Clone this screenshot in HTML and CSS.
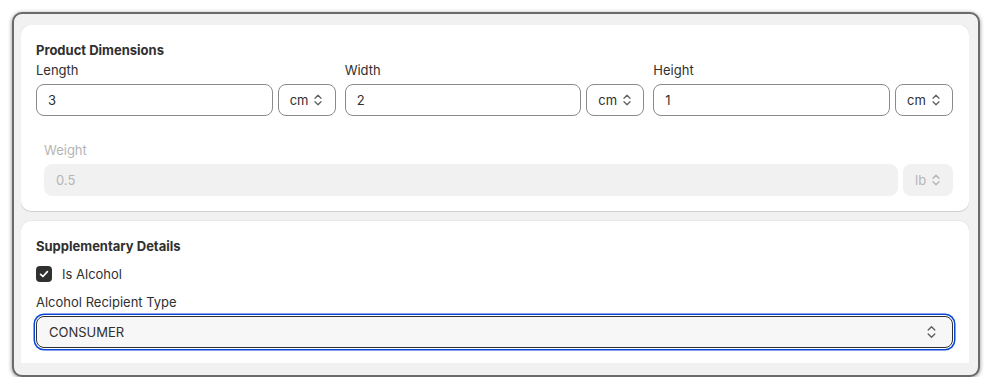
FILE: index.html
```html
<!DOCTYPE html>
<html>
<head>
<meta charset="utf-8">
<link rel="stylesheet" href="styles.css">
</head>
<body>
<div class="window">
  <div class="scroller">
    <section class="card">
      <h2 class="card-title">Product Dimensions</h2>
      <div class="dims">
        <div class="field">
          <label class="label">Length</label>
          <div class="row">
            <div class="input">3</div>
            <div class="unit">cm <svg class="chev" viewBox="0 0 10 14"><path d="M2 5.2 5 2.2 8 5.2M2 8.8 5 11.8 8 8.8"/></svg></div>
          </div>
        </div>
        <div class="field">
          <label class="label">Width</label>
          <div class="row">
            <div class="input">2</div>
            <div class="unit">cm <svg class="chev" viewBox="0 0 10 14"><path d="M2 5.2 5 2.2 8 5.2M2 8.8 5 11.8 8 8.8"/></svg></div>
          </div>
        </div>
        <div class="field">
          <label class="label">Height</label>
          <div class="row">
            <div class="input">1</div>
            <div class="unit">cm <svg class="chev" viewBox="0 0 10 14"><path d="M2 5.2 5 2.2 8 5.2M2 8.8 5 11.8 8 8.8"/></svg></div>
          </div>
        </div>
      </div>
      <div class="weight">
        <label class="label disabled-text">Weight</label>
        <div class="row">
          <div class="input disabled">0.5</div>
          <div class="unit disabled narrow">lb <svg class="chev" viewBox="0 0 10 14"><path d="M2 5.2 5 2.2 8 5.2M2 8.8 5 11.8 8 8.8"/></svg></div>
        </div>
      </div>
    </section>
    <section class="card card-clipped">
      <h2 class="card-title">Supplementary Details</h2>
      <div class="check-row">
        <span class="checkbox"><svg viewBox="0 0 16 16"><path d="M4.6 8.3 6.9 10.5 11.4 5.6"/></svg></span>
        <span class="check-label">Is Alcohol</span>
      </div>
      <label class="label label-gap">Alcohol Recipient Type</label>
      <div class="select-focus">
        <span>CONSUMER</span>
        <svg class="chev chev-big" viewBox="0 0 10 14"><path d="M2 5.2 5 2.2 8 5.2M2 8.8 5 11.8 8 8.8"/></svg>
      </div>
    </section>
  </div>
</div>
</body>
</html>
```

FILE: styles.css
```css
* { box-sizing: border-box; }
html, body { margin: 0; padding: 0; background: #ffffff; }
body {
  font-family: Inter, "Noto Sans", "Liberation Sans", sans-serif;
  font-size: 13px;
  color: #303030;
}
.window {
  margin: 12px 0 0 12px;
  width: 968px;
  height: 365px;
  border: 2px solid #6a6a6a;
  border-radius: 10px;
  background: #f1f1f1;
  padding: 11px 9px 12px 7px;
  box-shadow: 0 1px 4px rgba(0,0,0,0.45);
}
.scroller {
  height: 338px;
  overflow: hidden;
  display: flex;
  flex-direction: column;
  gap: 10px;
}
.card {
  background: #ffffff;
  border-radius: 10px;
  padding: 15px 16px 15px 15px;
  box-shadow: 0 1px 0 0 rgba(26,26,26,0.12), 0 0 0 1px rgba(26,26,26,0.03);
  flex-shrink: 0;
}
.card-clipped { padding-bottom: 30px; }
.card-title {
  margin: 0;
  font-size: 13px;
  font-weight: 650;
  line-height: 20px;
  color: #303030;
}
.label {
  display: block;
  line-height: 20px;
  color: #303030;
  margin-bottom: 4px;
}
.dims {
  display: grid;
  grid-template-columns: repeat(3, 1fr);
  column-gap: 9px;
}
.row {
  display: flex;
  gap: 5px;
}
.input {
  flex: 1;
  height: 32px;
  border: 1px solid #8a8a8a;
  border-radius: 8px;
  padding: 0 11px;
  display: flex;
  align-items: center;
  color: #303030;
}
.unit {
  width: 58px;
  height: 32px;
  border: 1px solid #8a8a8a;
  border-radius: 8px;
  padding: 0 0 0 11px;
  display: flex;
  align-items: center;
  gap: 5px;
  color: #303030;
}
.chev {
  width: 10px;
  height: 14px;
  fill: none;
  stroke: #616161;
  stroke-width: 1.3;
  stroke-linecap: round;
  stroke-linejoin: round;
}
.weight {
  margin: 24px 0 0 8px;
}
.disabled-text { color: #b5b5b5; }
.input.disabled, .unit.disabled {
  background: #f1f1f1;
  border-color: #f1f1f1;
  color: #b5b5b5;
}
.unit.disabled .chev { stroke: #b5b5b5; }
.unit.narrow { width: 50px; }
.check-row {
  margin-top: 8px;
  display: flex;
  align-items: center;
  gap: 10px;
  height: 20px;
}
.checkbox {
  width: 16px;
  height: 16px;
  border-radius: 4px;
  background: #303030;
  display: flex;
}
.checkbox svg {
  width: 16px;
  height: 16px;
  fill: none;
  stroke: #ffffff;
  stroke-width: 1.7;
  stroke-linecap: round;
  stroke-linejoin: round;
}
.label-gap { margin-top: 8px; }
.select-focus {
  height: 32px;
  border: 1px solid #303030;
  border-radius: 8px;
  background: #f7f7f7;
  padding: 0 15px 0 12px;
  display: flex;
  align-items: center;
  justify-content: space-between;
  box-shadow: 0 0 0 1px #ffffff, 0 0 0 2.5px #0a47d4;
  color: #303030;
}
.chev-big { width: 11px; height: 16px; }
```
